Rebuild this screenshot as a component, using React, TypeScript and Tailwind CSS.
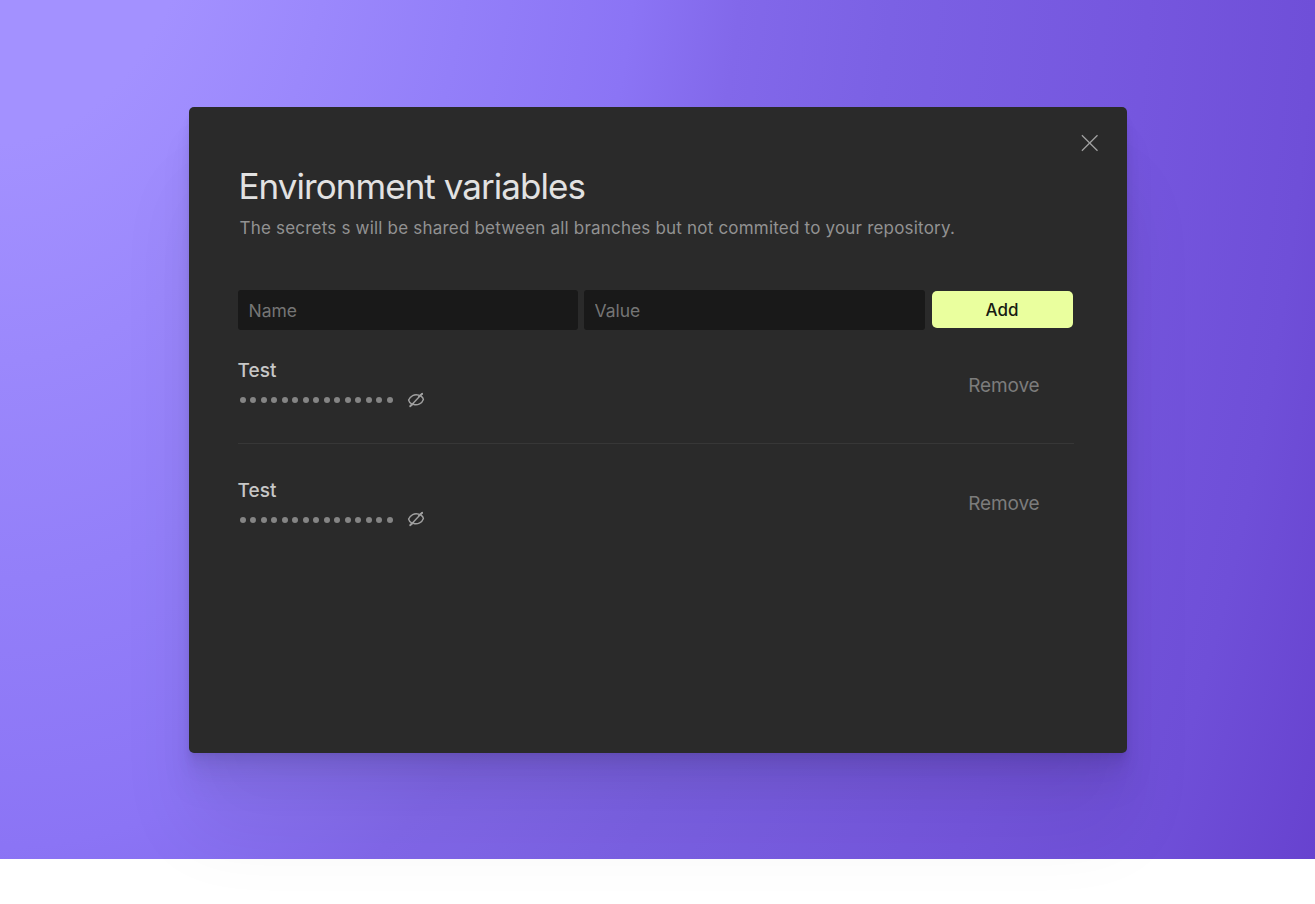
function HiddenIcon() {
  return (
    <svg width="18" height="16" viewBox="0 0 18 16" fill="none" stroke="#a0a0a0" strokeWidth="1.4" strokeLinecap="round" strokeLinejoin="round">
      <path d="M11.6 3.1C7.4 1.8 3.3 4.1 1.6 8C2 9.6 2.9 11 4.6 11.9" />
      <path d="M13.8 4C15.4 4.8 16.2 6 16.4 7.4C15 11.4 10.8 13.6 6.7 12.5" />
      <path d="M3.1 14.4L15.3 1.6" />
      <path d="M3.5 13.8L6.2 11.8M12 4.2L15 2" strokeWidth="2" />
    </svg>
  );
}

function Secret({ className, iconClass, removeClass }: { className: string; iconClass: string; removeClass: string }) {
  return (
    <div className={`flex justify-between ${className}`}>
      <div>
        <h2 className="text-[19px] leading-6 font-[450] tracking-[0.1px] text-[#c7c7c7]">Test</h2>
        <div className="mt-[9px] flex h-4 items-center">
          <div className="ml-[2px] flex gap-[4.5px]">
            {Array.from({ length: 15 }, (_, i) => (
              <span key={i} className="size-[6px] rounded-full bg-[#858585]" />
            ))}
          </div>
          <button aria-label="Show value" className={`ml-[14px] ${iconClass}`}><HiddenIcon /></button>
        </div>
      </div>
      <button className={`mr-[34px] h-6 text-[19px] leading-6 tracking-[-0.15px] text-[#7c7c7c] ${removeClass}`}>Remove</button>
    </div>
  );
}

export default function App() {
  return (
    <main className="h-[904px] w-full overflow-hidden bg-white font-['Inter',sans-serif]">
      <div className="h-[859px] bg-[radial-gradient(ellipse_1500px_2435px_at_0px_-200px,#a391ff_0%,#a391ff_14%,#937ff9_32%,#8b74f5_43%,#8268ea_50%,#7b61e4_60%,#7556de_77%,#6f4fd8_88%,#6742cf_98%)] pt-[107px]">
        <section className="mx-auto h-[646px] w-[938px] rounded-[5px] bg-[#2a2a2a] pt-[27px] pr-[53px] pl-[49px] shadow-[0_80px_80px_rgba(0,0,0,0.06),0_34px_34px_rgba(0,0,0,0.05),0_18px_18px_rgba(0,0,0,0.04),0_10px_10px_rgba(0,0,0,0.035),0_5px_5px_rgba(0,0,0,0.03),0_2px_2px_rgba(0,0,0,0.02)]">
          <div className="-mr-[25px] flex h-[18px] justify-end">
            <button aria-label="Close">
              <svg width="18" height="18" viewBox="0 0 18 18" fill="none" stroke="#a0a0a0" strokeWidth="1.3">
                <path d="M0.9 1.2L16.5 16.8M16.5 1.2L0.9 16.8" />
              </svg>
            </button>
          </div>
          <h1 className="mt-[12px] ml-px text-[35px] leading-[44px] font-normal tracking-[-0.95px] text-[#e2e2e2]">Environment variables</h1>
          <p className="mt-[8px] ml-[2px] text-[17px] leading-6 tracking-[0.2px] text-[#929292]">The secrets s will be shared between all branches but not commited to your repository.</p>
          <form className="mt-[50px] flex h-10 items-start">
            <input placeholder="Name" className="h-10 w-[340px] rounded-[3px] bg-[#191919] px-[11px] pt-px text-[17.5px] placeholder:text-[#757575]" />
            <input placeholder="Value" className="ml-[6px] h-10 w-[341px] rounded-[3px] bg-[#191919] px-[11px] pt-px text-[17.5px] placeholder:text-[#757575]" />
            <button type="button" className="mt-px ml-[7px] h-[37px] w-[141px] rounded-[5px] bg-[#eaff9e] pt-[3px] text-[17px] font-medium text-[#171b12]">Add</button>
          </form>
          <Secret className="mt-[29px] h-[85px] border-b border-[#373737]" iconClass="" removeClass="mt-[15px]" />
          <Secret className="mt-[35px]" iconClass="-mt-[2px]" removeClass="mt-[13px]" />
        </section>
      </div>
    </main>
  );
}
